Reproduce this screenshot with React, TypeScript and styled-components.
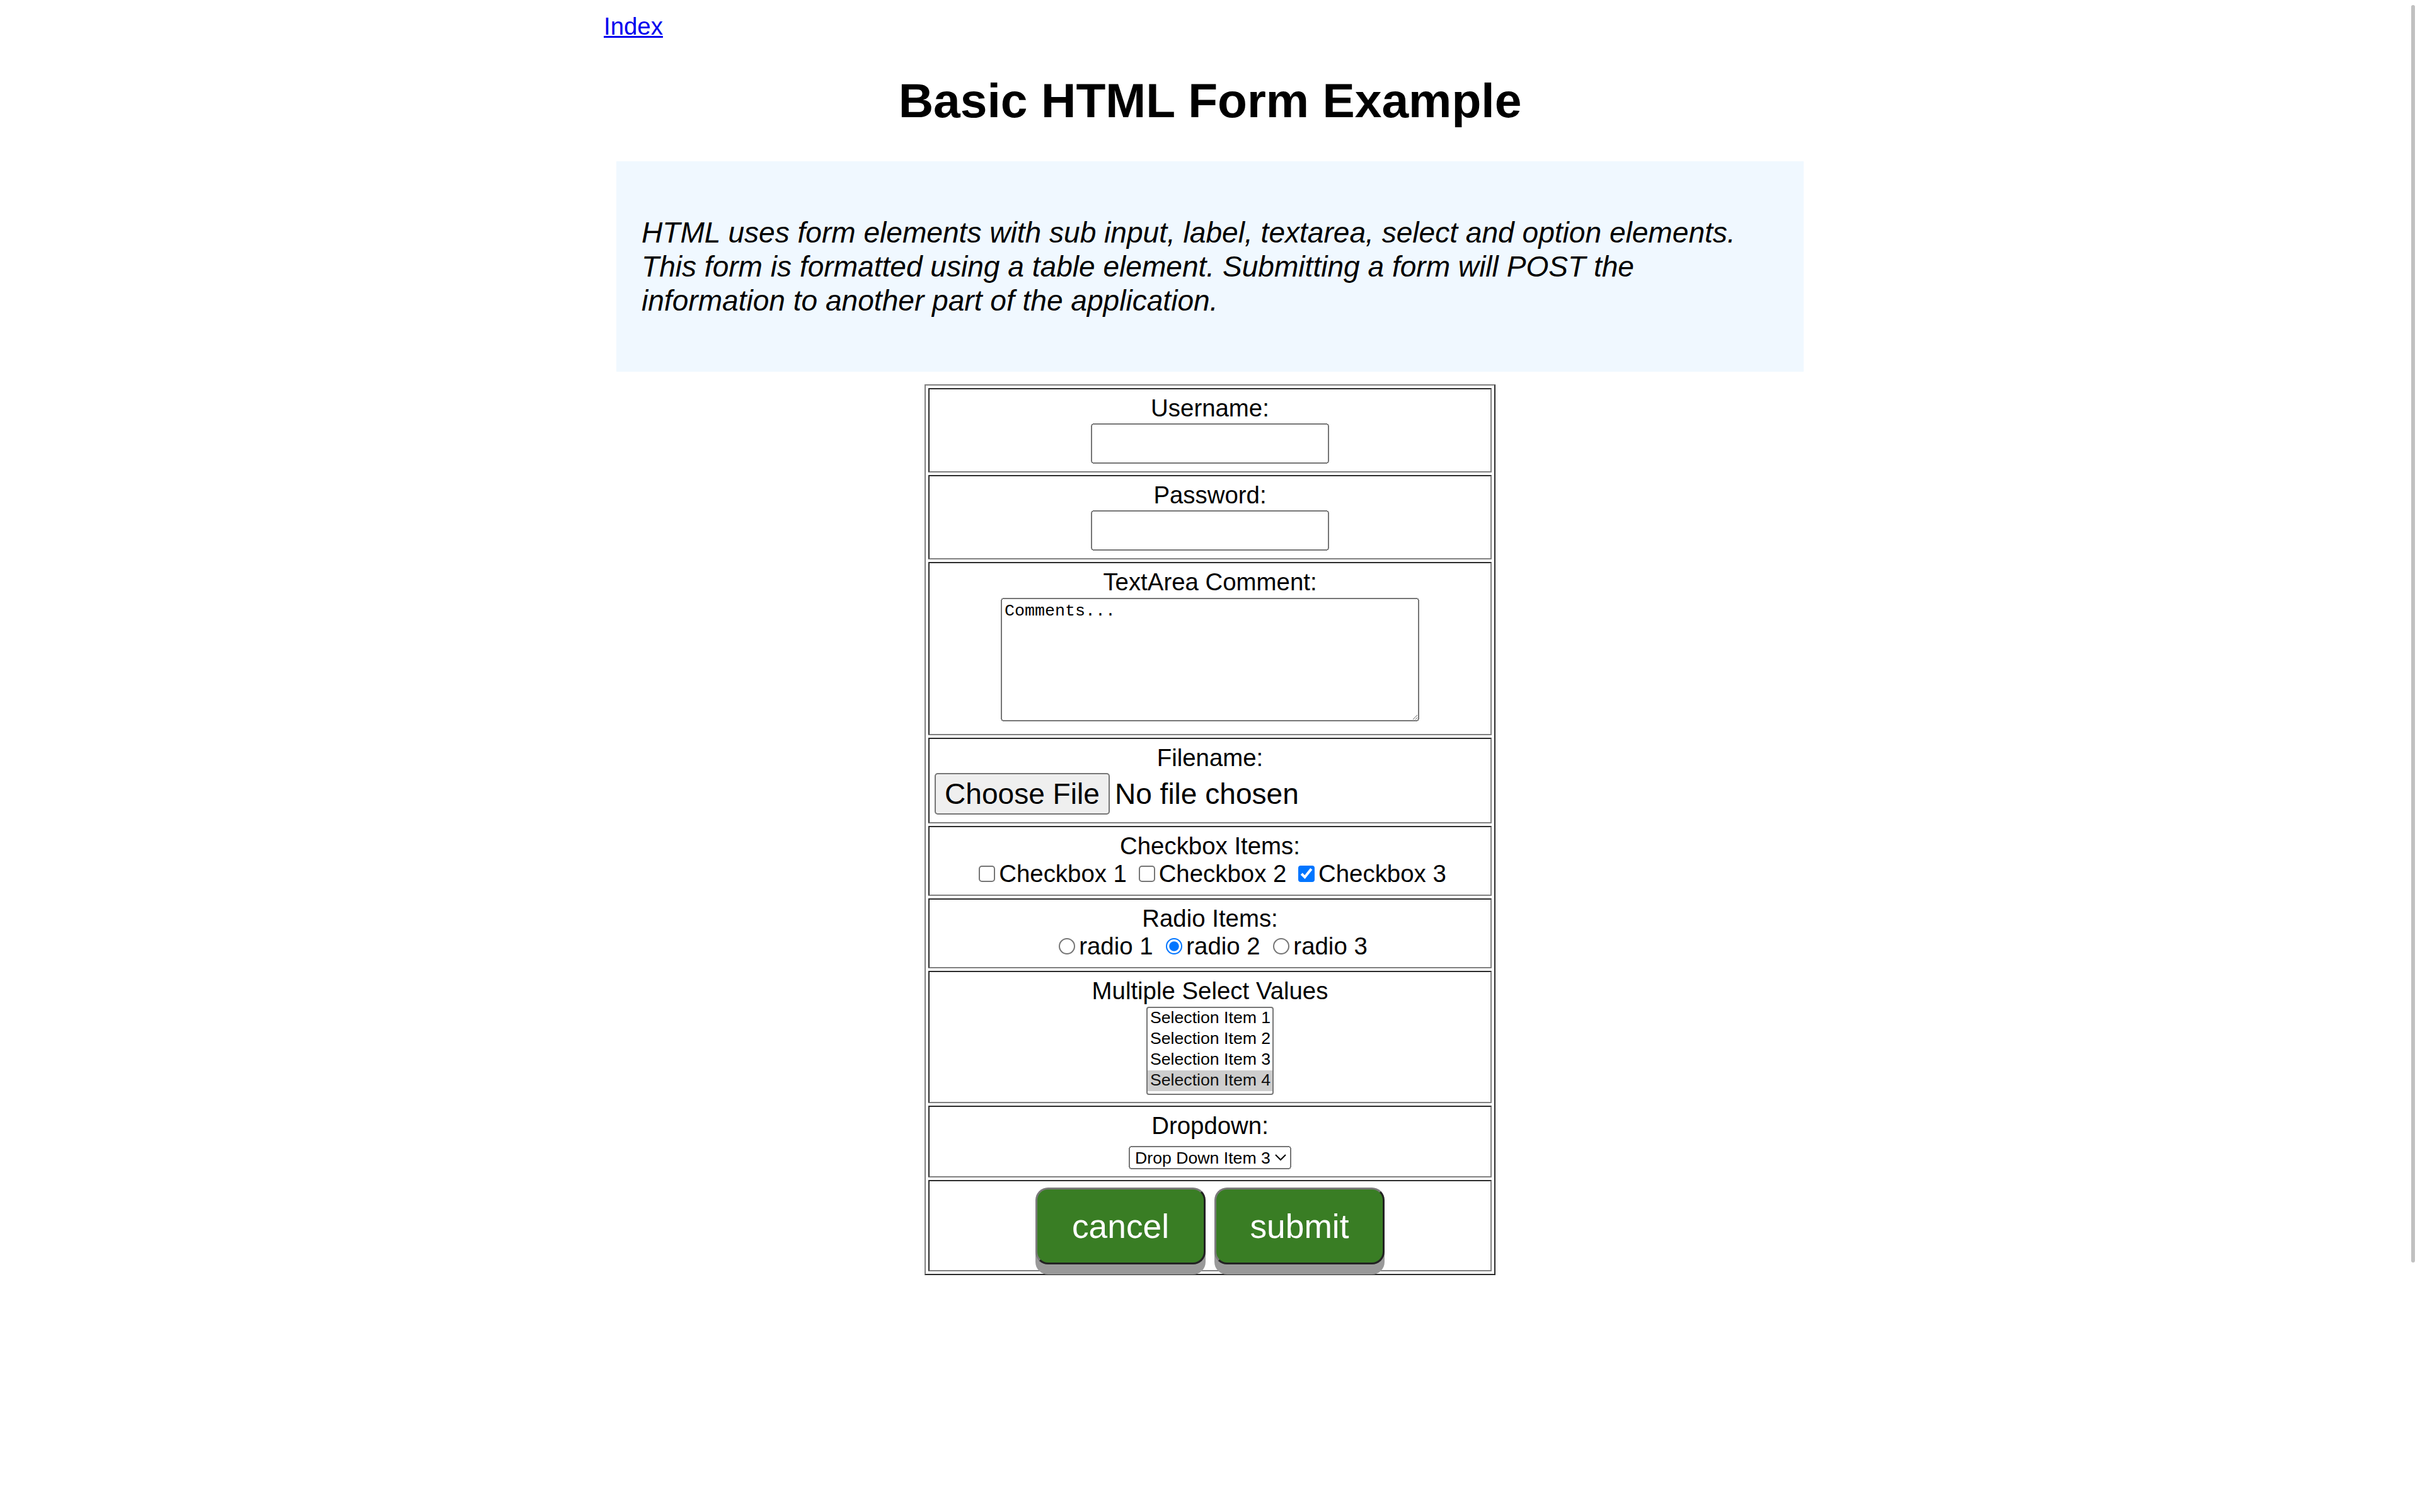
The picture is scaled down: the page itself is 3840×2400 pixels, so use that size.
import React from 'react';
import styled, { createGlobalStyle } from 'styled-components';

const GlobalStyle = createGlobalStyle`
  html, body {
    margin: 0;
    padding: 0;
    background: #fff;
  }
  body {
    font-family: "Liberation Sans", Arial, sans-serif;
  }
`;

// the reference was captured at a device pixel ratio of 2
const Page = styled.div`
  zoom: 2;
  font-family: "Liberation Sans", Arial, Helvetica, sans-serif;
  font-size: 19.2px;
  color: #000;
`;

const Wrapper = styled.div`
  width: 962px;
  margin: 0 auto;
  padding-top: 10px;
`;

const TopNav = styled.div`
  line-height: normal;
`;

const IndexLink = styled.a`
  color: #0000ee;
  text-decoration: underline;
`;

const Title = styled.h1`
  font-size: 38.4px;
  font-weight: bold;
  text-align: center;
  margin: 25.7px 0;
`;

const Intro = styled.div`
  background: #f0f8ff;
  margin: 10px;
  padding: 20px;
`;

const IntroText = styled.p`
  margin: 23.04px 0;
  font-size: 23.04px;
  font-style: italic;
`;

const FormTable = styled.table`
  margin: 0 auto;
  width: 453px;
  border-collapse: separate;
  border-spacing: 2px;
  border: 1px solid;
  border-color: #808080 #2b2b2b #2b2b2b #808080;
`;

const FieldCell = styled.td`
  padding: 4px;
  border: 1px solid;
  border-color: #2b2b2b #808080 #808080 #2b2b2b;
  text-align: center;
`;

const FieldStack = styled.div`
  display: flex;
  flex-direction: column;
  align-items: center;
`;

const FieldLabel = styled.label`
  display: block;
  line-height: normal;
`;

const TextInput = styled.input`
  box-sizing: border-box;
  width: 189px;
  height: 32px;
  margin: 1px 0 2px;
  font: 23.04px "Liberation Sans", Arial, sans-serif;
`;

const CommentBox = styled.textarea`
  box-sizing: border-box;
  width: 332px;
  height: 98px;
  margin: 1.5px 0 6px;
  font: 13.33px "Liberation Mono", "Courier New", monospace;
`;

const FileInput = styled.input`
  width: 437px;
  margin: 1.2px 0 1.6px;
  font: 23.04px "Liberation Sans", Arial, sans-serif;
  text-align: left;
`;

const ChoiceLine = styled.div`
  height: 23.5px;
  line-height: normal;
  white-space: nowrap;
`;

const ListSelect = styled.select`
  box-sizing: border-box;
  width: 101px;
  height: 70px;
  margin: 1.5px 0 1.7px;
  font: 13.33px "Liberation Sans", Arial, sans-serif;
  overflow: hidden;

  option {
    padding: 0 2px;
    height: 16.5px;
    line-height: 16.5px;
  }
  option:checked {
    background: #cecece linear-gradient(#cecece, #cecece);
    color: #101010;
  }
`;

const DropSelect = styled.select`
  box-sizing: border-box;
  width: 129px;
  height: 18.5px;
  margin: 4.9px 0 1.5px;
  font: 13.33px "Liberation Sans", Arial, sans-serif;
`;

const ButtonRow = styled.div`
  display: flex;
  justify-content: center;
  gap: 7px;
  margin: 1.2px 0 0.7px;
`;

const ActionButton = styled.button`
  box-sizing: border-box;
  width: 135px;
  height: 61px;
  padding: 0;
  background: #397d24;
  color: #fff;
  font: 26.67px "Liberation Sans", Arial, sans-serif;
  border: 1.5px solid;
  border-color: #7a7a7a #222 #222 #7a7a7a;
  border-radius: 10px;
  box-shadow: 0 8px #999;
  cursor: pointer;
`;

const ScrollThumb = styled.div`
  position: fixed;
  top: 4px;
  right: 4px;
  width: 3px;
  height: 998px;
  border-radius: 2px;
  background: #c1c1c1;
`;

const checkboxes = [
  { id: 'cb1', label: 'Checkbox 1', checked: false },
  { id: 'cb2', label: 'Checkbox 2', checked: false },
  { id: 'cb3', label: 'Checkbox 3', checked: true },
];

const radios = [
  { id: 'r1', label: 'radio 1', checked: false },
  { id: 'r2', label: 'radio 2', checked: true },
  { id: 'r3', label: 'radio 3', checked: false },
];

const App = () => {
  return (
    <>
      <GlobalStyle />
      <Page>
        <Wrapper>
          <TopNav>
            <IndexLink href="#">Index</IndexLink>
          </TopNav>
          <Title>Basic HTML Form Example</Title>
          <Intro>
            <IntroText>
              HTML uses form elements with sub input, label, textarea, select and option elements. This form
              is formatted using a table element. Submitting a form will POST the information to another part
              of the application.
            </IntroText>
          </Intro>
          <form onSubmit={(e) => e.preventDefault()}>
            <FormTable>
              <tbody>
                <tr>
                  <FieldCell>
                    <FieldStack>
                      <FieldLabel htmlFor="username">Username:</FieldLabel>
                      <TextInput id="username" type="text" name="username" />
                    </FieldStack>
                  </FieldCell>
                </tr>
                <tr>
                  <FieldCell>
                    <FieldStack>
                      <FieldLabel htmlFor="password">Password:</FieldLabel>
                      <TextInput id="password" type="password" name="password" />
                    </FieldStack>
                  </FieldCell>
                </tr>
                <tr>
                  <FieldCell>
                    <FieldStack>
                      <FieldLabel htmlFor="comment">TextArea Comment:</FieldLabel>
                      <CommentBox id="comment" name="comment" defaultValue="Comments..." />
                    </FieldStack>
                  </FieldCell>
                </tr>
                <tr>
                  <FieldCell>
                    <FieldStack>
                      <FieldLabel htmlFor="filename">Filename:</FieldLabel>
                      <FileInput id="filename" type="file" name="filename" />
                    </FieldStack>
                  </FieldCell>
                </tr>
                <tr>
                  <FieldCell>
                    <FieldLabel>Checkbox Items:</FieldLabel>
                    <ChoiceLine>
                      {checkboxes.map((c, i) => (
                        <React.Fragment key={c.id}>
                          {i > 0 && ' '}
                          <input type="checkbox" id={c.id} name={c.id} defaultChecked={c.checked} />
                          <label htmlFor={c.id}>{c.label}</label>
                        </React.Fragment>
                      ))}
                    </ChoiceLine>
                  </FieldCell>
                </tr>
                <tr>
                  <FieldCell>
                    <FieldLabel>Radio Items:</FieldLabel>
                    <ChoiceLine>
                      {radios.map((r, i) => (
                        <React.Fragment key={r.id}>
                          {i > 0 && ' '}
                          <input type="radio" id={r.id} name="radioitems" defaultChecked={r.checked} />
                          <label htmlFor={r.id}>{r.label}</label>
                        </React.Fragment>
                      ))}
                    </ChoiceLine>
                  </FieldCell>
                </tr>
                <tr>
                  <FieldCell>
                    <FieldStack>
                      <FieldLabel htmlFor="multi">Multiple Select Values</FieldLabel>
                      <ListSelect id="multi" name="multi" multiple size={4} defaultValue={['4']}>
                        <option value="1">Selection Item 1</option>
                        <option value="2">Selection Item 2</option>
                        <option value="3">Selection Item 3</option>
                        <option value="4">Selection Item 4</option>
                      </ListSelect>
                    </FieldStack>
                  </FieldCell>
                </tr>
                <tr>
                  <FieldCell>
                    <FieldStack>
                      <FieldLabel htmlFor="dropdown">Dropdown:</FieldLabel>
                      <DropSelect id="dropdown" name="dropdown" defaultValue="3">
                        <option value="1">Drop Down Item 1</option>
                        <option value="2">Drop Down Item 2</option>
                        <option value="3">Drop Down Item 3</option>
                        <option value="4">Drop Down Item 4</option>
                      </DropSelect>
                    </FieldStack>
                  </FieldCell>
                </tr>
                <tr>
                  <FieldCell>
                    <ButtonRow>
                      <ActionButton type="button">cancel</ActionButton>
                      <ActionButton type="submit">submit</ActionButton>
                    </ButtonRow>
                  </FieldCell>
                </tr>
              </tbody>
            </FormTable>
          </form>
        </Wrapper>
        <ScrollThumb />
      </Page>
    </>
  );
};

export default App;
